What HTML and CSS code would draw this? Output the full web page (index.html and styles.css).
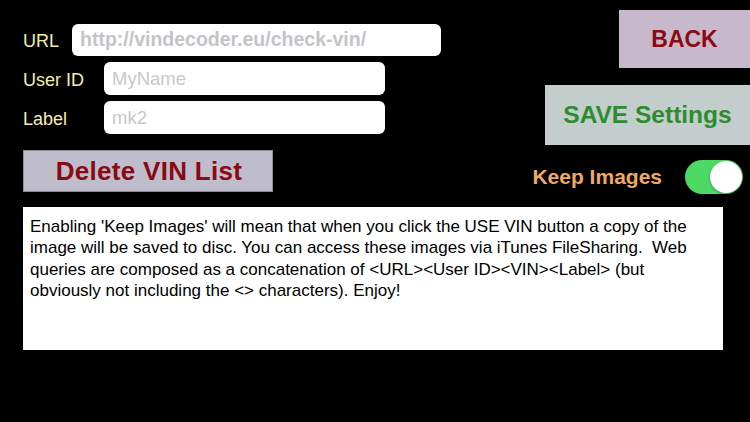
FILE: index.html
```html
<!DOCTYPE html>
<html>
<head>
<meta charset="utf-8">
<link rel="stylesheet" href="styles.css">
</head>
<body>
<div class="screen">
  <div class="top">
    <div class="left">
      <div class="field url-row">
        <span class="lbl">URL</span>
        <div class="input url-input">http://vindecoder.eu/check-vin/</div>
      </div>
      <div class="field">
        <span class="lbl lbl-wide">User ID</span>
        <div class="input small-input placeholder">MyName</div>
      </div>
      <div class="field">
        <span class="lbl lbl-wide">Label</span>
        <div class="input small-input placeholder">mk2</div>
      </div>
      <div class="delete-btn">Delete VIN List</div>
    </div>
    <div class="right">
      <div class="back-btn">BACK</div>
      <div class="save-btn">SAVE Settings</div>
      <div class="keep-row">
        <span class="keep-lbl">Keep Images</span>
        <span class="toggle"><span class="knob"></span></span>
      </div>
    </div>
  </div>
  <div class="info">Enabling 'Keep Images' will mean that when you click the USE VIN button a copy of the image will be saved to disc. You can access these images via iTunes FileSharing.&nbsp; Web queries are composed as a concatenation of &lt;URL&gt;&lt;User ID&gt;&lt;VIN&gt;&lt;Label&gt; (but obviously not including the &lt;&gt; characters). Enjoy!</div>
</div>
</body>
</html>
```
FILE: styles.css
```css
html, body {
  margin: 0;
  padding: 0;
  background: #000;
}
.screen {
  width: 750px;
  height: 422px;
  background: #000;
  font-family: "Liberation Sans", Arial, sans-serif;
  overflow: hidden;
}
.top {
  display: flex;
  justify-content: space-between;
  height: 207px;
}
.left {
  display: flex;
  flex-direction: column;
  padding-top: 23px;
  padding-left: 23px;
}
.field {
  display: flex;
  align-items: center;
  height: 33px;
  margin-bottom: 6px;
}
.lbl {
  color: #f3eea9;
  font-size: 18px;
  width: 49px;
  padding-top: 3px;
}
.lbl-wide {
  width: 81px;
}
.input {
  background: #fff;
  border-radius: 6px;
  height: 33px;
  box-sizing: border-box;
  display: flex;
  align-items: center;
  padding-left: 8px;
  font-size: 18px;
}
.url-input {
  width: 369px;
  color: #c4c4c8;
  font-weight: bold;
  font-size: 19.5px;
  height: 32px;
}
.small-input {
  width: 281px;
  padding-left: 8px;
  font-size: 18.5px;
}
.placeholder {
  color: #c7c7cd;
}
.delete-btn {
  margin-top: 10px;
  width: 250px;
  height: 42px;
  box-sizing: border-box;
  background: #bfbccb;
  border: 1px solid #8e8c96;
  color: #8a0a14;
  font-weight: bold;
  font-size: 26px;
  letter-spacing: 0.3px;
  display: flex;
  align-items: center;
  justify-content: center;
  padding-left: 2px;
}
.right {
  display: flex;
  flex-direction: column;
  align-items: flex-end;
  padding-top: 10px;
}
.back-btn {
  width: 131px;
  height: 58px;
  background: #c8b8cc;
  color: #8a0a14;
  font-weight: bold;
  font-size: 23px;
  display: flex;
  align-items: center;
  justify-content: center;
  box-sizing: border-box;
}
.save-btn {
  margin-top: 17px;
  width: 205px;
  height: 60px;
  background: #c3cdcb;
  color: #2e8b30;
  font-weight: bold;
  font-size: 24.5px;
  display: flex;
  align-items: center;
  justify-content: center;
}
.keep-row {
  margin-top: 15px;
  display: flex;
  align-items: center;
  padding-right: 7px;
}
.keep-lbl {
  color: #f2a865;
  font-weight: bold;
  font-size: 21px;
  margin-right: 23px;
}
.toggle {
  width: 58px;
  height: 34px;
  border-radius: 17px;
  background: #4cd964;
  position: relative;
  display: block;
}
.knob {
  position: absolute;
  right: 1px;
  top: 1px;
  width: 32px;
  height: 32px;
  border-radius: 50%;
  background: #fff;
  box-shadow: 0 1px 3px rgba(0,0,0,0.3);
}
.info {
  margin-left: 23px;
  width: 700px;
  height: 143px;
  box-sizing: border-box;
  background: #fff;
  color: #000;
  font-size: 17px;
  line-height: 21.3px;
  padding: 9px 7px;
}
```
